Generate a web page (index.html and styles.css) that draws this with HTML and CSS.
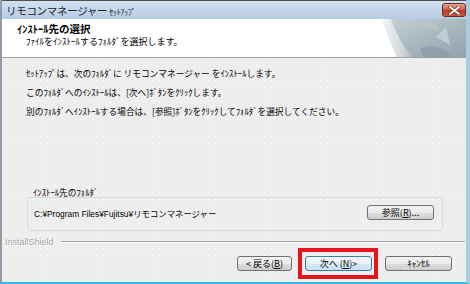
FILE: index.html
```html
<!DOCTYPE html>
<html lang="ja">
<head>
  <meta charset="UTF-8">
  <title>リモコンマネージャー ｾｯﾄｱｯﾌﾟ</title>
  <link rel="stylesheet" href="styles.css">
</head>
<body>

  <div class="window">
    <div class="titlebar">
      <span class="title">リモコンマネージャー <small>ｾｯﾄｱｯﾌﾟ</small></span>
      <div class="close">
        <svg width="13" height="9" viewBox="0 0 13 9">
          <path d="M2 1 L11 8 M11 1 L2 8" stroke="#6a2a20" stroke-width="3.2" stroke-linecap="round"/>
          <path d="M2 1 L11 8 M11 1 L2 8" stroke="#fff" stroke-width="1.8" stroke-linecap="round"/>
        </svg>
      </div>
    </div>

    <div class="header">
      <div class="header-text">
        <h1>ｲﾝｽﾄｰﾙ先の選択</h1>
        <p>ﾌｧｲﾙをｲﾝｽﾄｰﾙするﾌｫﾙﾀﾞを選択します。</p>
      </div>
      <svg class="header-art" width="86" height="38" viewBox="0 0 86 38">
        <defs>
          <linearGradient id="bg" x1="0" y1="0" x2="1" y2="1">
            <stop offset="0" stop-color="#c8d2d8"/>
            <stop offset="0.5" stop-color="#aab8c0"/>
            <stop offset="1" stop-color="#93a4ad"/>
          </linearGradient>
          <linearGradient id="curl" x1="0" y1="0" x2="1" y2="0">
            <stop offset="0" stop-color="#f6f6f6"/>
            <stop offset="0.6" stop-color="#d2d8dc"/>
            <stop offset="1" stop-color="#a9b5bc"/>
          </linearGradient>
        </defs>
        <path d="M2 0 H86 V38 H17 C12 26 6 12 2 0 Z" fill="url(#bg)"/>
        <path d="M2 0 C6 12 12 26 17 38 H34 C27 32 20 22 16 12 C14 7 12 3 11 0 Z" fill="url(#curl)"/>
        <path d="M40 2 C48 0 58 4 60 12 C56 10 48 10 42 8 Z" fill="#bcc7cd" opacity="0.7"/>
        <path d="M56 18 L66 8 L70 26 Z" fill="#c9d3d8" opacity="0.8"/>
        <path d="M40 30 C50 24 64 28 72 38 H44 Z" fill="#8797a1" opacity="0.6"/>
      </svg>
    </div>

    <div class="content">
      <p>ｾｯﾄｱｯﾌﾟは、次のﾌｫﾙﾀﾞに リモコンマネージャー をｲﾝｽﾄｰﾙします。</p>
      <p>このﾌｫﾙﾀﾞへのｲﾝｽﾄｰﾙは、[次へ]ﾎﾞﾀﾝをｸﾘｯｸします。</p>
      <p>別のﾌｫﾙﾀﾞへｲﾝｽﾄｰﾙする場合は、[参照]ﾎﾞﾀﾝをｸﾘｯｸしてﾌｫﾙﾀﾞを選択してください。</p>

      <div class="group">
        <div class="group-label">ｲﾝｽﾄｰﾙ先のﾌｫﾙﾀﾞ</div>
        <div class="group-box">
          <span class="path">C:¥Program Files¥Fujitsu¥リモコンマネージャー</span>
          <button class="btn browse">参照(<u>R</u>)...</button>
        </div>
      </div>
    </div>

    <div class="brand">
      <span>InstallShield</span>
      <div class="rule"></div>
    </div>

    <div class="actions">
      <button class="btn back">&lt; 戻る(<u>B</u>)</button>
      <button class="btn next marked">次へ (<u>N</u>)&gt;</button>
      <button class="btn cancel">ｷｬﾝｾﾙ</button>
    </div>
  </div>

</body>
</html>
```

FILE: styles.css
```css
body {
  margin: 0;
  font-family: "Noto Sans CJK JP", sans-serif;
  font-size: 8.7px;
  color: #000;
}

.window {
  width: 470px;
  height: 284px;
  box-sizing: border-box;
  display: flex;
  flex-direction: column;
  background-color: #eeeeee;
  background-image: radial-gradient(#fbfbfb 0.6px, transparent 1px);
  background-size: 7px 7px;
  border-left: 2px solid #8f9ca8;
  border-right: 4px solid #a9cce5;
  border-bottom: 2px solid #35b9e2;
}

.titlebar {
  height: 19px;
  flex: none;
  box-sizing: border-box;
  display: flex;
  align-items: center;
  justify-content: space-between;
  padding: 0 0 0 4px;
  background: linear-gradient(#d3e1f0, #b6cce6);
  border-top: 1px solid #4f4f4f;
}

.title {
  font-size: 10.5px;
  color: #222;
  letter-spacing: -0.3px;
}

.title small {
  font-size: 8px;
}

.close {
  width: 22px;
  height: 12px;
  display: flex;
  align-items: center;
  justify-content: center;
  border: 1px solid #6b2b22;
  border-radius: 3px;
  background: linear-gradient(#e6a394, #cf5a43 50%, #b93b25 51%, #c9583f);
}

.header {
  height: 38px;
  flex: none;
  display: flex;
  background: #fff;
  border-bottom: 1px solid #a0a0a0;
}

.header-text {
  flex: 1;
  padding: 3px 0 0 15px;
}

.header h1 {
  margin: 0;
  font-size: 10.5px;
  line-height: 13px;
  font-weight: bold;
}

.header p {
  margin: 1px 0 0 9px;
  font-size: 9px;
  line-height: 12px;
}

.header-art {
  flex: none;
  align-self: flex-end;
}

.content {
  flex: 1;
  display: flex;
  flex-direction: column;
  padding: 6px 0 5px 24px;
}

.content p {
  margin: 0;
  line-height: 19px;
}

.group {
  margin: auto 23px 0 1px;
}

.group-label {
  padding-left: 6px;
  line-height: 9px;
}

.group-box {
  height: 29px;
  display: flex;
  align-items: center;
  justify-content: space-between;
  padding: 0 8px 3px 6px;
  border: 1px solid #d5dde2;
  border-radius: 3px;
}

.path {
  font-family: "Liberation Sans", "Noto Sans CJK JP", sans-serif;
  font-size: 8.4px;
}

.brand {
  height: 11px;
  flex: none;
  display: flex;
  align-items: center;
  padding: 0 1px 0 3px;
}

.brand span {
  font-family: "Liberation Sans", sans-serif;
  font-size: 9px;
  color: #a6a6a6;
  text-shadow: 1px 1px 0 #fff;
}

.brand .rule {
  flex: 1;
  margin-left: 7px;
  border-top: 1px solid #a0a0a0;
  border-bottom: 1px solid #fff;
}

.actions {
  height: 35px;
  flex: none;
  box-sizing: border-box;
  display: flex;
  justify-content: flex-end;
  align-items: flex-start;
  gap: 13px;
  padding: 9px 14px 0 0;
}

.btn {
  height: 15px;
  padding: 0;
  font-family: "Noto Sans CJK JP", sans-serif;
  font-size: 9px;
  line-height: 13px;
  color: #000;
  border: 1px solid #707070;
  border-radius: 3px;
  background: linear-gradient(#f2f2f2, #ebebeb 50%, #dddddd 51%, #cfcfcf);
}

.browse {
  width: 67px;
}

.back {
  width: 55px;
}

.next,
.cancel {
  width: 67px;
}

.next {
  border-color: #3c7fb1;
  background: linear-gradient(#f4f9fc, #e6f2f9 50%, #d7e9f5 51%, #c9e1f1);
}

.marked {
  position: relative;
}

.marked::after {
  content: "";
  position: absolute;
  top: -9px;
  bottom: -9px;
  left: -8px;
  right: -7px;
  border: 4px solid #e8141c;
}
```
